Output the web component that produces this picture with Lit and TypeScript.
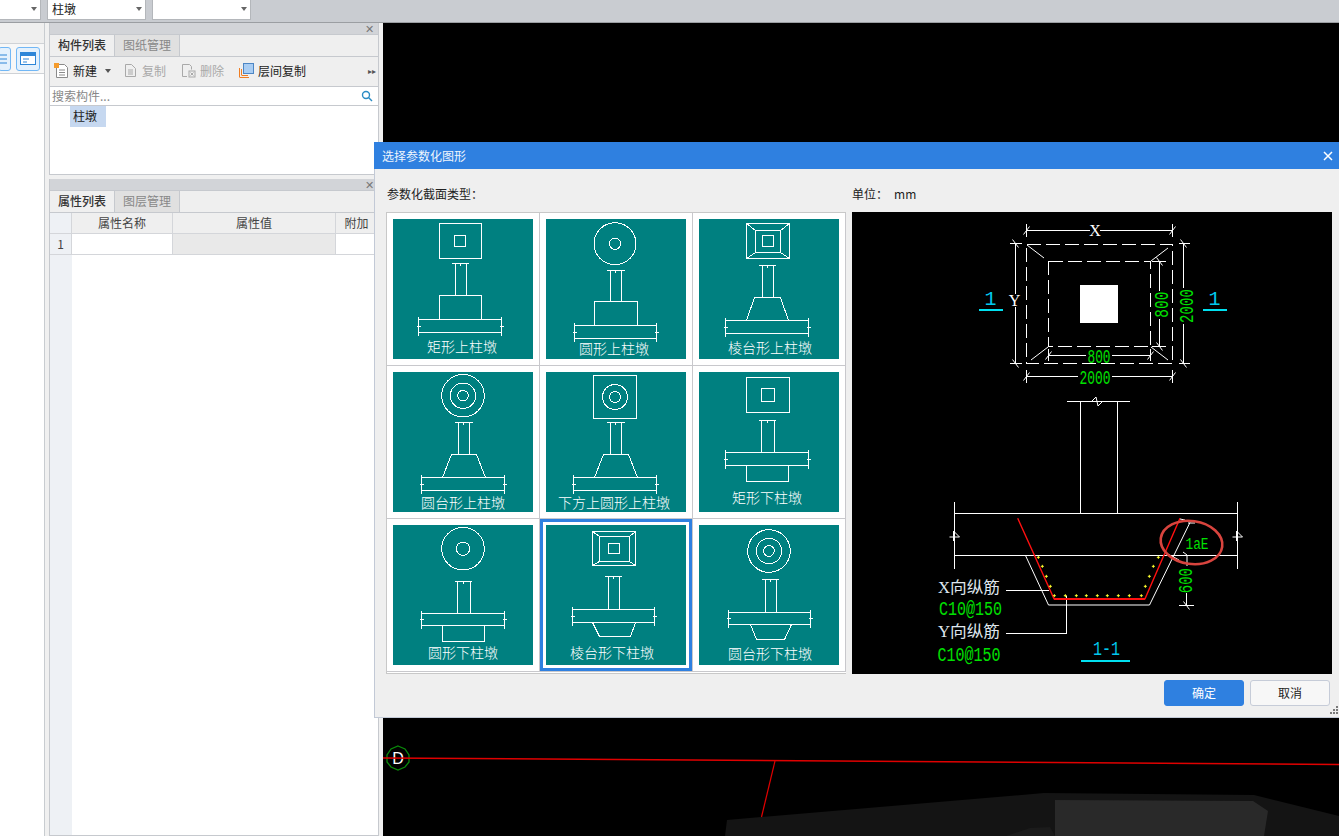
import { LitElement, html, css, svg } from 'lit';
import { customElement } from 'lit/decorators.js';

// small drawing helpers for the CAD thumbnails, coordinates are local pixels
const ln = (x1: number, y1: number, x2: number, y2: number) =>
  svg`<line x1=${x1} y1=${y1} x2=${x2} y2=${y2}></line>`;
const box = (x1: number, y1: number, x2: number, y2: number) =>
  svg`<rect x=${x1} y=${y1} width=${x2 - x1} height=${y2 - y1}></rect>`;
const ring = (cx: number, cy: number, ...radii: number[]) =>
  radii.map((r) => svg`<circle cx=${cx} cy=${cy} r=${r}></circle>`);
const trap = (x1: number, x2: number, y1: number, x3: number, x4: number, y2: number) =>
  svg`<polyline points="${x1},${y1} ${x3},${y2} ${x4},${y2} ${x2},${y1}"></polyline>`;

const column = (x1: number, x2: number, y1: number, y2: number, c1: number, c2: number) => [
  ln(c1, y1, c2, y1),
  ln(x1, y1, x1, y2),
  ln(x2, y1, x2, y2),
  ln((c1 + c2) / 2, y1 - 1, (c1 + c2) / 2, y1 + 2),
];

const slab = (x1: number, x2: number, y1: number, y2: number) => [
  ln(x1, y1, x2, y1),
  ln(x1, y2, x2, y2),
  ln(x1, y1 - 3, x1, y2 + 3),
  ln(x2, y1 - 3, x2, y2 + 3),
  ln(x1 - 2, (y1 + y2) / 2, x1 + 2, (y1 + y2) / 2),
  ln(x2 - 2, (y1 + y2) / 2, x2 + 2, (y1 + y2) / 2),
];

const frustum = (ox1: number, oy1: number, ox2: number, oy2: number, mx1: number, my1: number, mx2: number, my2: number) => [
  box(ox1, oy1, ox2, oy2),
  box(mx1, my1, mx2, my2),
  ln(ox1, oy1, mx1, my1),
  ln(ox2, oy1, mx2, my1),
  ln(ox1, oy2, mx1, my2),
  ln(ox2, oy2, mx2, my2),
];

interface Thumb {
  label: string;
  lx: number;
  ly: number;
  shapes: unknown[];
  selected?: boolean;
}

const THUMBS: Thumb[] = [
  {
    label: '矩形上柱墩', lx: 69, ly: 128,
    shapes: [box(46.5, 4.5, 88.5, 39.5), box(61.5, 16.5, 72.5, 27.5), column(62.5, 73.5, 44.5, 76.5, 58.5, 75.5), box(46.5, 76.5, 88.5, 100.5), slab(25.5, 108.5, 100.5, 113.5)],
  },
  {
    label: '圆形上柱墩', lx: 68, ly: 130,
    shapes: [ring(69, 24.7, 21, 5.6), column(64.5, 75.5, 51.5, 82.5, 60.5, 78.5), box(48.5, 82.5, 91.5, 106.5), slab(28.5, 110.5, 106.5, 119.5)],
  },
  {
    label: '棱台形上柱墩', lx: 71, ly: 129,
    shapes: [frustum(47.5, 4.5, 90.5, 39.5, 56.5, 11.5, 81.5, 33.5), box(63.5, 16.5, 74.5, 27.5), column(63.5, 74.5, 46.5, 78.5, 59.5, 76.5), trap(47.5, 89.5, 101.5, 55.5, 81.5, 78.5), slab(26.5, 109.5, 101.5, 114.5)],
  },
  {
    label: '圆台形上柱墩', lx: 70, ly: 131,
    shapes: [ring(70, 23.7, 21.3, 12.7, 5.3), column(65.5, 76.5, 50.5, 82.5, 61.5, 79.5), trap(49.5, 92.5, 105.5, 58.5, 83.5, 82.5), slab(28.5, 111.5, 105.5, 118.5)],
  },
  {
    label: '下方上圆形上柱墩', lx: 68, ly: 131,
    shapes: [box(47.5, 3.5, 90.5, 46.5), ring(69, 25, 12.5, 5.5), column(64.5, 75.5, 50.5, 82.5, 60.5, 78.5), trap(48.5, 91.5, 105.5, 57.5, 82.5, 82.5), slab(27.5, 110.5, 105.5, 118.5)],
  },
  {
    label: '矩形下柱墩', lx: 68, ly: 126,
    shapes: [box(47.5, 5.5, 90.5, 40.5), box(62.5, 16.5, 75.5, 29.5), column(62.5, 75.5, 48.5, 80.5, 59.5, 76.5), slab(26.5, 109.5, 80.5, 93.5), box(47.5, 93.5, 89.5, 109.5)],
  },
  {
    label: '圆形下柱墩', lx: 70, ly: 128,
    shapes: [ring(70, 23.7, 21.3, 6.7), column(64.5, 77.5, 56.5, 88.5, 61.5, 78.5), slab(28.5, 111.5, 88.5, 100.5), box(49.5, 100.5, 91.5, 116.5)],
  },
  {
    label: '棱台形下柱墩', lx: 66, ly: 128, selected: true,
    shapes: [frustum(46.5, 6.5, 89.5, 40.5, 53.5, 11.5, 83.5, 36.5), box(62.5, 18.5, 73.5, 28.5), column(62.5, 73.5, 51.5, 84.5, 58.5, 75.5), slab(26.5, 108.5, 84.5, 97.5), trap(46.5, 89.5, 97.5, 53.5, 84.5, 111.5)],
  },
  {
    label: '圆台形下柱墩', lx: 71, ly: 129,
    shapes: [ring(70, 26, 21.3, 12.7, 5.3), column(66.5, 77.5, 54.5, 87.5, 62.5, 79.5), slab(29.5, 111.5, 87.5, 99.5), trap(51.5, 92.5, 99.5, 57.5, 85.5, 114.5)],
  },
];

const REBAR_DOTS = [
  [355, 502], [367, 529], [379, 559], [391, 589], [403, 617], [436, 617], [469, 617], [499, 617], [532, 617],
  [562, 617], [595, 617], [628, 617], [664, 617], [676, 589], [688, 559], [700, 529], [715, 502],
].map(([x, y]) => [920 + x / 3, 390 + y / 3]);

// dimension ticks: "/" on horizontal dims, "\" on vertical dims
const tick = (x: number, y: number) => ln(x - 3, y + 4, x + 3, y - 4);
const tickV = (x: number, y: number) => ln(x - 3, y - 4, x + 3, y + 4);
const sideBreak = (cx: number, cy: number) =>
  svg`<path d="M${cx - 5} ${cy + 2}L${cx + 5} ${cy + 2}L${cx - 1} ${cy - 4}L${cx - 1} ${cy + 6}"></path>`;

@customElement('app-root')
export class AppRoot extends LitElement {
  static styles = css`
    :host {
      display: block;
      position: relative;
      height: 836px;
      overflow: hidden;
      font: 12px/16px "Noto Sans CJK SC", "Liberation Sans", sans-serif;
      color: #222;
      background: #f0f0f0;
    }
    .top {
      display: flex;
      gap: 6px;
      height: 22px;
      border-bottom: 1px solid #9b9ea2;
      background: #c9ccd1;
    }
    .pick {
      position: relative;
      box-sizing: border-box;
      width: 99px;
      height: 20px;
      padding: 1px 4px;
      border: 1px solid #b4b7bb;
      border-top: 0;
      background: #fff;
    }
    .pick.cut {
      width: 42px;
      margin-left: -1px;
    }
    .pick::after {
      content: '';
      position: absolute;
      right: 3px;
      top: 7px;
      border: 3px solid transparent;
      border-top: 4px solid #666;
    }
    .main {
      display: flex;
      height: 813px;
    }
    .strip {
      box-sizing: border-box;
      width: 45px;
      border-right: 1px solid #c8ccd0;
      background: #fff;
    }
    .strip-head {
      height: 20px;
      border-bottom: 1px solid #cfd2d6;
      background: #efefef;
    }
    .strip-tools {
      display: flex;
      gap: 5px;
      height: 30px;
      margin-left: -2px;
      padding-top: 3px;
      box-sizing: border-box;
      border-bottom: 1px solid #cfd2d6;
      background: #f7f7f7;
    }
    .tool {
      box-sizing: border-box;
      display: flex;
      align-items: center;
      justify-content: center;
      width: 24px;
      height: 24px;
      border: 1px solid #72b7f5;
      border-radius: 3px;
      background: #e4f1fd;
    }
    .tool.left {
      width: 13px;
    }
    .panels {
      display: flex;
      flex-direction: column;
      gap: 4px;
      box-sizing: border-box;
      width: 338px;
      padding: 0 4px;
      background: #f0f0f0;
    }
    .panel {
      box-sizing: border-box;
      display: flex;
      flex-direction: column;
      border: 1px solid #c6c9ce;
      border-top: 0;
      background: #fff;
    }
    .panel.list {
      height: 152px;
    }
    .panel.props {
      flex: 1;
    }
    .bar {
      position: relative;
      box-sizing: border-box;
      height: 12px;
      border-bottom: 1px solid #c6c9ce;
      background: #d2d4d8;
    }
    .bar span {
      position: absolute;
      right: 4px;
      top: -1px;
      font: 11px/14px "Liberation Sans", sans-serif;
      color: #777;
    }
    .tabs {
      display: flex;
      box-sizing: border-box;
      height: 22px;
      border-bottom: 1px solid #c6c9ce;
      background: #efefef;
    }
    .tab {
      box-sizing: border-box;
      width: 65px;
      border-right: 1px solid #c6c9ce;
      text-align: center;
      line-height: 19px;
      color: #333;
      font-weight: 500;
    }
    .tab.off {
      background: #e0e0e0;
      color: #888;
      font-weight: 400;
    }
    .toolbar {
      display: flex;
      align-items: center;
      box-sizing: border-box;
      height: 29px;
      padding: 0 0 2px 4px;
      background: #efefef;
    }
    .act {
      display: flex;
      align-items: center;
      gap: 4px;
    }
    .act.off {
      color: #a9a9a9;
    }
    .act.gap-copy {
      margin-left: 13px;
    }
    .act.gap {
      margin-left: 15px;
    }
    .caret {
      margin-left: 8px;
      border: 3px solid transparent;
      border-top: 4px solid #555;
      margin-top: 4px;
    }
    .more {
      margin-left: auto;
      margin-right: 2px;
      font-size: 8px;
      color: #555;
    }
    .search {
      display: flex;
      align-items: center;
      justify-content: space-between;
      height: 18px;
      padding: 0 5px 0 2px;
      border-top: 1px solid #c6c9ce;
      border-bottom: 1px solid #c6c9ce;
      color: #888;
    }
    .tree {
      flex: 1;
      padding-left: 20px;
    }
    .tree span {
      display: block;
      box-sizing: border-box;
      width: 36px;
      height: 21px;
      padding-left: 3px;
      line-height: 20px;
      background: #c6d8f0;
    }
    .row {
      display: grid;
      grid-template-columns: 22px 101px 163px 1fr;
      height: 21px;
      line-height: 20px;
      text-align: center;
      color: #444;
    }
    .row > div {
      box-sizing: border-box;
      border-right: 1px solid #d4d6da;
      border-bottom: 1px solid #d4d6da;
    }
    .row.head > div {
      background: #efefef;
    }
    .row > div.gutter {
      background: #eef1f5;
    }
    .row .value {
      background: #e9e9e9;
    }
    .row.fill {
      flex: 1;
      height: auto;
    }
    .row.fill > div {
      border-bottom: 0;
      border-right: 0;
    }
    .canvas {
      flex: 1;
      background: #000;
    }
    .canvas svg {
      display: block;
      width: 100%;
      height: 100%;
    }
    .dialog {
      position: absolute;
      left: 374px;
      top: 142px;
      right: 0;
      height: 576px;
      box-sizing: border-box;
      display: flex;
      flex-direction: column;
      border-bottom: 1px solid #c2c9d6;
      border-left: 1px solid #c2c9d6;
      background: #efefef;
    }
    .title {
      display: flex;
      align-items: center;
      justify-content: space-between;
      height: 27px;
      margin-left: -1px;
      padding: 0 6px 0 8px;
      background: #2f80e0;
      color: #eef5fd;
    }
    .title svg {
      display: block;
    }
    .captions {
      display: flex;
      height: 43px;
      padding: 17px 0 0 12px;
      box-sizing: border-box;
    }
    .captions .left {
      width: 465px;
      color: #222;
    }
    .captions .unit {
      display: flex;
      gap: 6px;
    }
    .content {
      display: flex;
      gap: 6px;
      padding-left: 11px;
    }
    .grid {
      box-sizing: border-box;
      display: grid;
      grid-template-columns: repeat(3, 153px);
      grid-auto-rows: 153px;
      width: 460px;
      height: 462px;
      border-left: 1px solid #c8c8c8;
      border-top: 1px solid #c8c8c8;
      border-bottom: 1px solid #c8c8c8;
      padding-bottom: 1px;
      background: #fff;
    }
    .cell {
      box-sizing: border-box;
      padding: 6px;
      border-right: 1px solid #c8c8cc;
      border-bottom: 1px solid #c8c8cc;
    }
    .cell.selected {
      box-shadow: inset 0 0 0 3px #2f80e0;
    }
    .thumb {
      display: block;
      width: 140px;
      height: 140px;
      background: #008080;
      fill: none;
      stroke: #fff;
      stroke-width: 1;
      shape-rendering: crispEdges;
    }
    .thumb text {
      fill: #fff;
      stroke: none;
      font-size: 14px;
      font-weight: 300;
      font-family: "Noto Sans CJK SC", sans-serif;
      text-anchor: middle;
    }
    .preview {
      display: block;
      width: 480px;
      height: 462px;
      background: #000;
      fill: none;
      stroke: #fff;
      stroke-width: 1;
    }
    .preview .crisp {
      shape-rendering: crispEdges;
    }
    .preview text {
      stroke: none;
      text-anchor: middle;
      font-family: "Liberation Mono", monospace;
      font-size: 20px;
    }
    .preview .green {
      fill: #00e000;
    }
    .preview .cyan {
      fill: #00c8ee;
    }
    .preview .white {
      font-family: "Liberation Serif", serif;
      font-size: 16px;
      fill: #fff;
    }
    .preview .note {
      font-family: "Liberation Serif", "Noto Sans CJK SC", serif;
      font-size: 16px;
      fill: #dfe6ee;
    }
    .preview .small {
      font-size: 16px;
    }
    .footer {
      position: relative;
      display: flex;
      justify-content: flex-end;
      gap: 6px;
      padding: 6px 9px 0 0;
    }
    .btn {
      box-sizing: border-box;
      width: 80px;
      height: 26px;
      border: 1px solid #c6ccd8;
      border-radius: 3px;
      background: #f7f7f7;
      text-align: center;
      line-height: 24px;
    }
    .btn.primary {
      border-color: #2f80e0;
      background: #2f80e0;
      color: #fff;
    }
    .grip {
      position: absolute;
      right: 1px;
      top: 32px;
      fill: #7a7a7a;
    }
  `;

  private renderThumb(t: Thumb) {
    return html`<div class="cell ${t.selected ? 'selected' : ''}">
      <svg class="thumb" viewBox="0 0 140 140">
        ${t.shapes}
        <text x=${t.lx} y=${t.ly + 5}>${t.label}</text>
      </svg>
    </div>`;
  }

  private renderPlan() {
    return svg`
      <g class="crisp">
        <rect x="1026.5" y="244.5" width="146" height="119" stroke-dasharray="14 5"></rect>
        <rect x="1048.5" y="261.5" width="102" height="85" stroke-dasharray="14 5"></rect>
        ${ln(1026.5, 230.5, 1090, 230.5)}${ln(1100, 230.5, 1172.5, 230.5)}
        ${ln(1026.5, 224, 1026.5, 237)}${ln(1172.5, 224, 1172.5, 237)}
        ${ln(1010, 243.5, 1022, 243.5)}${ln(1010, 363.5, 1022, 363.5)}
        ${ln(1015.5, 244, 1015.5, 294)}${ln(1015.5, 307, 1015.5, 364)}
        ${ln(1179, 243.5, 1190, 243.5)}${ln(1179, 363.5, 1190, 363.5)}
        ${ln(1183.5, 244, 1183.5, 288)}${ln(1183.5, 324, 1183.5, 364)}
        ${ln(1152, 261.5, 1166, 261.5)}${ln(1152, 346.5, 1166, 346.5)}
        ${ln(1159.5, 262, 1159.5, 291)}${ln(1159.5, 319, 1159.5, 346)}
        ${ln(1048.5, 355.5, 1086, 355.5)}${ln(1112, 355.5, 1150.5, 355.5)}
        ${ln(1048.5, 349, 1048.5, 361)}${ln(1150.5, 349, 1150.5, 361)}
        ${ln(1026.5, 376.5, 1078, 376.5)}${ln(1112, 376.5, 1172.5, 376.5)}
        ${ln(1026.5, 370, 1026.5, 383)}${ln(1172.5, 370, 1172.5, 383)}
      </g>
      ${ln(1027, 245, 1044, 258)}${ln(1168, 248, 1151, 261)}${ln(1048, 347, 1031, 360)}${ln(1151, 347, 1168, 360)}
      ${tick(1026.5, 230.5)}${tick(1172.5, 230.5)}${tickV(1015.5, 243.5)}${tickV(1015.5, 363.5)}
      ${tickV(1183.5, 243.5)}${tickV(1183.5, 363.5)}${tickV(1159.5, 261.5)}${tickV(1159.5, 346.5)}
      ${tick(1048.5, 355.5)}${tick(1150.5, 355.5)}${tick(1026.5, 376.5)}${tick(1172.5, 376.5)}
      <rect x="1080" y="285" width="38" height="38" fill="#fff" stroke="none"></rect>
      <text class="white" x="1095" y="236">X</text>
      <text class="white" x="1014.5" y="305.500">Y</text>
      <text class="green" x="1099" y="363" textLength="23" lengthAdjust="spacingAndGlyphs">800</text>
      <text class="green" x="1095" y="384" textLength="31" lengthAdjust="spacingAndGlyphs">2000</text>
      <text class="green" transform="rotate(-90 1162 304.700)" x="1162" y="311" textLength="26" lengthAdjust="spacingAndGlyphs">800</text>
      <text class="green" transform="rotate(-90 1186 306)" x="1186" y="312.500" textLength="34" lengthAdjust="spacingAndGlyphs">2000</text>
      <rect x="979" y="309" width="24" height="2" fill="#00e0f0" stroke="none"></rect>
      <rect x="1203" y="309" width="24" height="2" fill="#00e0f0" stroke="none"></rect>
      <text class="cyan" x="990.500" y="304.500">1</text>
      <text class="cyan" x="1214.500" y="304.500">1</text>
    `;
  }

  private renderSection() {
    const dots = REBAR_DOTS.map(
      ([x, y]) => svg`<path d="M${x - 1.5} ${y}h3M${x} ${y - 1.5}v3" stroke="#ffff30"></path>`,
    );
    return svg`
      <g class="crisp">
        ${ln(1067, 401.5, 1130, 401.5)}
        ${ln(1080.5, 401.5, 1080.5, 513.5)}${ln(1117.5, 401.5, 1117.5, 513.5)}
        ${ln(954.5, 513.5, 1237.5, 513.5)}${ln(954.5, 555.5, 1237.5, 555.5)}
        ${ln(954.5, 502, 954.5, 569)}${ln(1237.5, 502, 1237.5, 569)}
        ${ln(1006, 590.5, 1049, 590.5)}
        ${ln(1006, 633.5, 1066.5, 633.5)}${ln(1066.5, 596, 1066.5, 633.5)}
      </g>
      <path d="M1092 401L1096 397L1098 406L1102 402"></path>
      ${sideBreak(954.5, 535)}${sideBreak(1237.5, 535)}
      <polyline points="1025.5,555.5 1048.5,605 1149.5,605 1190,522.500"></polyline>
      <polyline points="1017.7,518.3 1054,598.7 1145,598.7 1180,518.3" stroke="#ff1010" stroke-width="1.4"></polyline>
      <rect x="1054" y="598" width="91" height="2" fill="#ff1010" stroke="none"></rect>
      ${dots}
      <path d="M1180 519l5 1M1188 523h7M1166 553l13 7"></path>
      <path d="M1183 552l4 3v11"></path>
      ${ln(1186.5, 593, 1186.5, 605)}${ln(1179, 605.5, 1194, 605.5)}${tickV(1186.5, 605.5)}
      <ellipse cx="1191.5" cy="542.5" rx="31" ry="21.5" transform="rotate(8 1191.5 542.5)" stroke="#d8443e" stroke-width="2.6"></ellipse>
      <text class="green small" x="1197" y="549" textLength="23" lengthAdjust="spacingAndGlyphs">1aE</text>
      <text class="green" transform="rotate(-90 1185.300 580.700)" x="1185.300" y="587" textLength="25" lengthAdjust="spacingAndGlyphs">600</text>
      <text class="note" x="969" y="593" textLength="62" lengthAdjust="spacingAndGlyphs">X向纵筋</text>
      <text class="note" x="969" y="637" textLength="62" lengthAdjust="spacingAndGlyphs">Y向纵筋</text>
      <text class="green" x="970.500" y="615" textLength="63" lengthAdjust="spacingAndGlyphs">C10@150</text>
      <text class="green" x="969" y="661" textLength="63" lengthAdjust="spacingAndGlyphs">C10@150</text>
      <text class="cyan" x="1106.500" y="654.500" textLength="27" lengthAdjust="spacingAndGlyphs">1-1</text>
      <rect x="1081" y="660" width="49" height="2" fill="#00e0f0" stroke="none"></rect>
    `;
  }

  render() {
    return html`
      <div class="top">
        <div class="pick cut"></div>
        <div class="pick">柱墩</div>
        <div class="pick"></div>
      </div>
      <div class="main">
        <div class="strip">
          <div class="strip-head"></div>
          <div class="strip-tools">
            <div class="tool left">
              <svg width="9" height="14" viewBox="0 0 9 14" fill="none" stroke="#2e86d8"><path d="M0 3h7M0 7h7M0 11h7"></path></svg>
            </div>
            <div class="tool">
              <svg width="16" height="14" viewBox="0 0 16 14" fill="none"><rect x=".5" y=".5" width="15" height="12" fill="#fff" stroke="#2e86d8"></rect><rect x="1" y="1" width="14" height="3" fill="#2e86d8"></rect><path d="M3 7h6M3 10h4" stroke="#2e86d8"></path></svg>
            </div>
          </div>
        </div>
        <div class="panels">
          <div class="panel list">
            <div class="bar"><span>✕</span></div>
            <div class="tabs"><div class="tab">构件列表</div><div class="tab off">图纸管理</div></div>
            <div class="toolbar">
              <div class="act">
                <svg width="15" height="16" viewBox="0 0 15 16" fill="#fff" stroke="#8a8a8a"><path d="M2.5 1.5h8l3 3v10h-11z"></path><path d="M5 7h6M5 9.500h6M5 12h6" fill="none"></path><rect x="0" y="0" width="5" height="5" fill="#f59b2b" stroke="none"></rect></svg>
                新建
              </div>
              <span class="caret"></span>
              <div class="act off gap-copy">
                <svg width="14" height="15" viewBox="0 0 14 15" fill="none" stroke="#a9a9a9"><path d="M1.500 1.500h6l4 4v8h-10z"></path><path d="M4 7h5M4 9h5M4 11h5"></path></svg>
                复制
              </div>
              <div class="act off gap">
                <svg width="15" height="15" viewBox="0 0 15 15" fill="none" stroke="#a9a9a9"><path d="M1.500 1.500h7l2 2v3M6 13.500h-4.500v-12"></path><rect x="8" y="8" width="6" height="6"></rect><path d="M9.500 9.500l3 3M12.500 9.500l-3 3"></path></svg>
                删除
              </div>
              <div class="act gap">
                <svg width="15" height="15" viewBox="0 0 15 15" fill="none"><path d="M.5 14V5M.5 14.500H10" stroke="#ef7d22"></path><path d="M2.500 12V6M2.500 12.500H9" stroke="#ef7d22"></path><rect x="4.500" y=".5" width="10" height="10" fill="#a9cdf3" stroke="#4d86c4"></rect></svg>
                层间复制
              </div>
              <span class="more">▸▸</span>
            </div>
            <div class="search">
              <span>搜索构件...</span>
              <svg width="12" height="12" viewBox="0 0 12 12" fill="none" stroke="#2b8cc4" stroke-width="1.400"><circle cx="5" cy="5" r="3.500"></circle><path d="M7.500 7.500l3.500 3.500"></path></svg>
            </div>
            <div class="tree"><span>柱墩</span></div>
          </div>
          <div class="panel props">
            <div class="bar"><span>✕</span></div>
            <div class="tabs"><div class="tab">属性列表</div><div class="tab off">图层管理</div></div>
            <div class="row head">
              <div class="gutter"></div><div>属性名称</div><div>属性值</div><div>附加</div>
            </div>
            <div class="row">
              <div class="gutter">1</div><div></div><div class="value"></div><div></div>
            </div>
            <div class="row fill">
              <div class="gutter"></div>
            </div>
          </div>
        </div>
        <div class="canvas">
          <svg viewBox="383 23 956 813">
            <polygon points="727,820 1044,793 1254,795 1339,816 1339,836 725,836" fill="#141414"></polygon>
            <polygon points="1006,836 1030,828 1050,827 1055,836" fill="#1b1b1b"></polygon>
            <polygon points="1055,800 1253,801 1268,811 1264,836 1055,836" fill="#292929"></polygon>
            <polygon points="398,746 405,749 409,755 409,762 405,767 398,770 391,767 387,762 387,755 391,749" fill="none" stroke="#0a8a0a" stroke-width="1.300"></polygon>
            <text x="398" y="764" fill="#fff" font-size="16" text-anchor="middle" font-family="Liberation Sans, sans-serif">D</text>
            <line x1="383" y1="758" x2="1339" y2="764.500" stroke="#e00000" stroke-width="1.500"></line>
            <line x1="775" y1="761" x2="761.500" y2="817" stroke="#e00000" stroke-width="1.200"></line>
          </svg>
        </div>
      </div>
      <div class="dialog">
        <div class="title">
          <span>选择参数化图形</span>
          <svg width="10" height="10" viewBox="0 0 10 10" stroke="#fff" stroke-width="1.500"><path d="M1 1l8 8M9 1l-8 8"></path></svg>
        </div>
        <div class="captions">
          <div class="left">参数化截面类型：</div>
          <div class="unit"><span>单位：</span><span>mm</span></div>
        </div>
        <div class="content">
          <div class="grid">${THUMBS.map((t) => this.renderThumb(t))}</div>
          <svg class="preview" viewBox="852 212 480 462">
            ${this.renderPlan()}
            ${this.renderSection()}
          </svg>
        </div>
        <div class="footer">
          <div class="btn primary">确定</div>
          <div class="btn">取消</div>
          <svg class="grip" width="8" height="8" viewBox="0 0 8 8">
            <rect x="6" y="0" width="2" height="2"></rect>
            <rect x="3" y="3" width="2" height="2"></rect><rect x="6" y="3" width="2" height="2"></rect>
            <rect x="0" y="6" width="2" height="2"></rect><rect x="3" y="6" width="2" height="2"></rect><rect x="6" y="6" width="2" height="2"></rect>
          </svg>
        </div>
      </div>
    `;
  }
}

declare global {
  interface HTMLElementTagNameMap {
    'app-root': AppRoot;
  }
}
